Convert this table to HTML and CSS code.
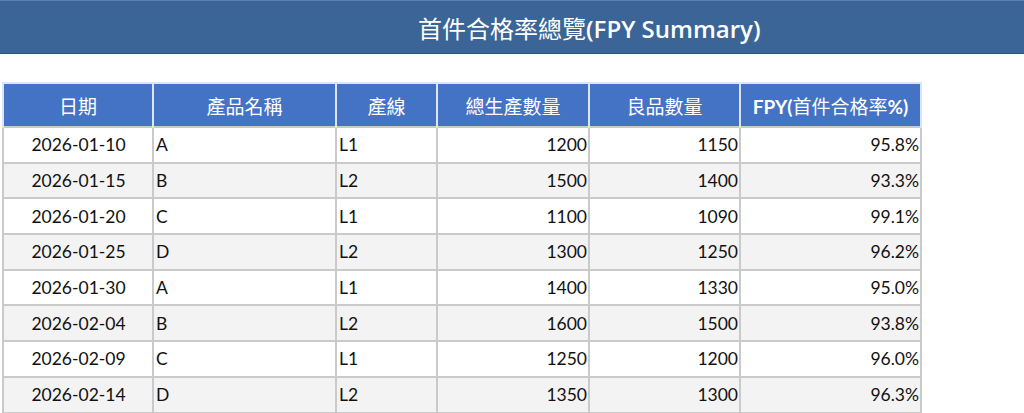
FILE: index.html
```html
<!DOCTYPE html>
<html lang="zh-Hant">
<head>
<meta charset="utf-8">
<title>首件合格率總覽</title>
<link rel="stylesheet" href="styles.css">
</head>
<body>
<header class="titlebar">
  <h1 class="title"><span class="cjk">首件合格率總覽</span><span class="en">(FPY Summary)</span></h1>
</header>
<main class="content">
  <table class="grid">
    <colgroup>
      <col class="c-date"><col class="c-prod"><col class="c-line"><col class="c-total"><col class="c-good"><col class="c-fpy">
    </colgroup>
    <thead>
      <tr>
        <th>日期</th>
        <th>產品名稱</th>
        <th>產線</th>
        <th>總生產數量</th>
        <th>良品數量</th>
        <th><span class="en">FPY(</span>首件合格率<span class="en">%)</span></th>
      </tr>
    </thead>
    <tbody>
      <tr><td class="ctr">2026-01-10</td><td>A</td><td>L1</td><td class="num">1200</td><td class="num">1150</td><td class="num">95.8%</td></tr>
      <tr><td class="ctr">2026-01-15</td><td>B</td><td>L2</td><td class="num">1500</td><td class="num">1400</td><td class="num">93.3%</td></tr>
      <tr><td class="ctr">2026-01-20</td><td>C</td><td>L1</td><td class="num">1100</td><td class="num">1090</td><td class="num">99.1%</td></tr>
      <tr><td class="ctr">2026-01-25</td><td>D</td><td>L2</td><td class="num">1300</td><td class="num">1250</td><td class="num">96.2%</td></tr>
      <tr><td class="ctr">2026-01-30</td><td>A</td><td>L1</td><td class="num">1400</td><td class="num">1330</td><td class="num">95.0%</td></tr>
      <tr><td class="ctr">2026-02-04</td><td>B</td><td>L2</td><td class="num">1600</td><td class="num">1500</td><td class="num">93.8%</td></tr>
      <tr><td class="ctr">2026-02-09</td><td>C</td><td>L1</td><td class="num">1250</td><td class="num">1200</td><td class="num">96.0%</td></tr>
      <tr><td class="ctr">2026-02-14</td><td>D</td><td>L2</td><td class="num">1350</td><td class="num">1300</td><td class="num">96.3%</td></tr>
    </tbody>
  </table>
</main>
</body>
</html>
```

FILE: styles.css
```css
html, body {
  margin: 0;
  padding: 0;
  background: #ffffff;
}
body {
  font-family: Lato, "Noto Sans CJK TC", sans-serif;
  color: #111111;
}
.titlebar {
  height: 54px;
  background: #3a6596;
  border-top: 1px solid #5a82b0;
  border-bottom: 1px solid #2f5580;
  box-sizing: border-box;
  display: flex;
  align-items: center;
  padding-left: 418px;
}
.title {
  margin: 0;
  font-size: 24px;
  line-height: 1;
  color: #ffffff;
  font-weight: 400;
  padding-top: 4px;
}
.title .en {
  font-family: "Open Sans", Lato, sans-serif;
  font-weight: 600;
}
.content {
  padding: 28px 0 0 2px;
}
.grid {
  border-collapse: collapse;
  table-layout: fixed;
  width: 918px;
}
.c-date { width: 150px; }
.c-prod { width: 183px; }
.c-line { width: 101px; }
.c-total { width: 152px; }
.c-good { width: 151px; }
.c-fpy { width: 181px; }
.grid th {
  background: #4472c4;
  color: #ffffff;
  font-size: 19px;
  font-weight: 400;
  height: 44px;
  padding: 0 2px;
  border: 2px solid #dbe6f4;
  border-bottom: none;
  text-align: center;
  box-sizing: border-box;
}
.grid th .en {
  font-weight: 700;
}
.grid td {
  font-size: 17.5px;
  height: 35.7px;
  padding: 0 1px 0 2px;
  border: 2px solid #cacaca;
  box-sizing: border-box;
  text-align: left;
  white-space: nowrap;
}
.grid tbody tr:nth-child(even) td {
  background: #f3f3f3;
}
.grid td.ctr { text-align: center; }
.grid td.num { text-align: right; }
```
